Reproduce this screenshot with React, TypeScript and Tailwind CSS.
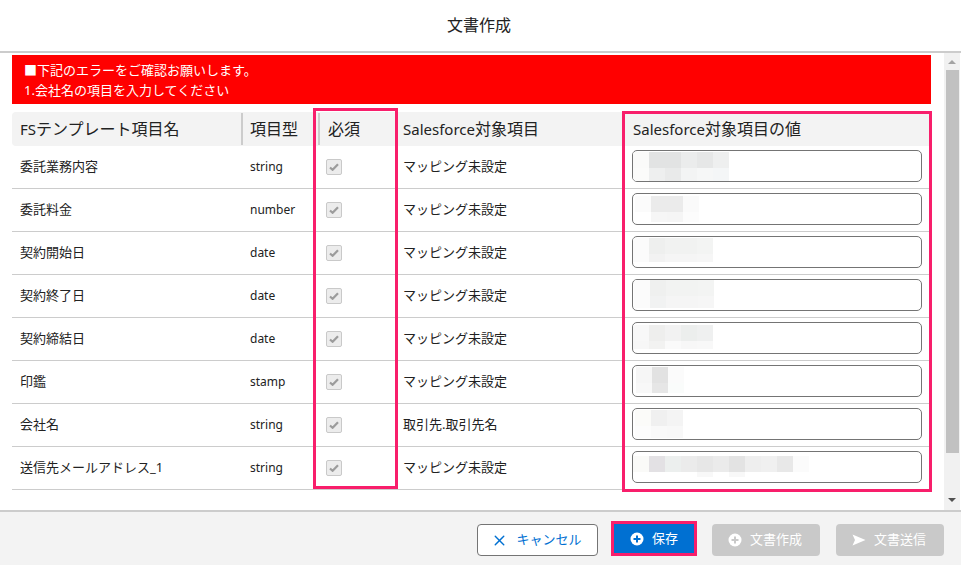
import { X } from 'lucide-react';

type Mosaic = {
    left: number;
    top: number;
    upperHeight: number;
    lowerHeight: number;
    upper: string[];
    lower: string[];
};

type Row = {
    name: string;
    type: string;
    target: string;
    mosaic: Mosaic;
};

const rows: Row[] = [
    {
        name: '委託業務内容', type: 'string', target: 'マッピング未設定',
        mosaic: {
            left: 0, top: 1, upperHeight: 16, lowerHeight: 13,
            upper: ['#fafaf9', '#e2e3e3', '#e2e3e3', '#ebecec', '#e6e7e7', '#eeefef'],
            lower: ['#fbfbfa', '#eeefef', '#e9eaea', '#f3f4f4', '#f6f7f7', '#f4f6f7'],
        },
    },
    {
        name: '委託料金', type: 'number', target: 'マッピング未設定',
        mosaic: {
            left: 2, top: 2, upperHeight: 16, lowerHeight: 10,
            upper: ['#fbfbfb', '#ebebeb', '#ebebeb', '#fafafa'],
            lower: ['#ffffff', '#f6f6f6', '#f5f5f5', '#fcfcfc'],
        },
    },
    {
        name: '契約開始日', type: 'date', target: 'マッピング未設定',
        mosaic: {
            left: 0, top: 1, upperHeight: 16, lowerHeight: 8,
            upper: ['#fbfbfb', '#eeefee', '#f1f2f1', '#f1f2f1', '#f3f4f3'],
            lower: ['#fbfbfb', '#f2f2f2', '#f5f5f5', '#f5f5f5', '#f6f6f6'],
        },
    },
    {
        name: '契約終了日', type: 'date', target: 'マッピング未設定',
        mosaic: {
            left: 1, top: 0, upperHeight: 16, lowerHeight: 12,
            upper: ['#fbfbfb', '#eff0ef', '#f2f3f2', '#f2f3f2', '#f3f4f3'],
            lower: ['#fbfbfb', '#f1f2f2', '#f5f5f5', '#f5f5f5', '#f6f6f6'],
        },
    },
    {
        name: '契約締結日', type: 'date', target: 'マッピング未設定',
        mosaic: {
            left: 0, top: 2, upperHeight: 16, lowerHeight: 8,
            upper: ['#f8f8f8', '#eeeeed', '#f2f2f2', '#eceeed', '#eff0f0'],
            lower: ['#f7f7f7', '#f2f2f1', '#fafafa', '#f7f7f7', '#f8f8f8'],
        },
    },
    {
        name: '印鑑', type: 'stamp', target: 'マッピング未設定',
        mosaic: {
            left: 3, top: 1, upperHeight: 16, lowerHeight: 10,
            upper: ['#f6f6f6', '#e2e2e2', '#fbfbfb'],
            lower: ['#f8f8f8', '#e6e6e6', '#fafcfb'],
        },
    },
    {
        name: '会社名', type: 'string', target: '取引先.取引先名',
        mosaic: {
            left: 2, top: 1, upperHeight: 16, lowerHeight: 12,
            upper: ['#fbfbf9', '#f0f0f0', '#f4f4f4'],
            lower: ['#fcfcfc', '#f9f9f9', '#f8f8f8'],
        },
    },
    {
        name: '送信先メールアドレス_1', type: 'string', target: 'マッピング未設定',
        mosaic: {
            left: 0, top: 4, upperHeight: 16, lowerHeight: 5,
            upper: ['#fafaf8', '#e3e1e4', '#ecefee', '#ebebeb', '#e7e7e7', '#ebebeb', '#e3e3e3', '#eeeeee', '#f0f0f0', '#e8e8e8', '#fbfbfb'],
            lower: ['#ffffff', '#ffffff', '#ffffff', '#ffffff', '#f8f8f8', '#ffffff', '#f8f8f8', '#ffffff', '#ffffff', '#ffffff', '#ffffff'],
        },
    },
];

const gridCols = 'grid grid-cols-[230px_76px_79px_225px_309px]';

const PlusCircle = () => (
    <svg width="14" height="14" viewBox="0 0 14 14" className="shrink-0">
        <circle cx="7" cy="7" r="6.5" fill="#ffffff" />
        <path d="M7 3.5v7M3.5 7h7" stroke="var(--btn-bg)" strokeWidth="2" />
    </svg>
);

const SendIcon = () => (
    <svg width="14" height="12" viewBox="0 0 14 12" className="shrink-0">
        <path d="M0.5 0.5 L13.5 6 L0.5 11.5 L3 6 Z" fill="#ffffff" />
    </svg>
);

const CheckMark = () => (
    <svg width="10" height="8" viewBox="0 0 10 8">
        <path d="M1 4.5 L3.6 6.8 L9 1.2" fill="none" stroke="#9c9c9c" strokeWidth="2.2" />
    </svg>
);

const MosaicBlock = ({ mosaic }: { mosaic: Mosaic }) => (
    <div style={{ marginLeft: mosaic.left, marginTop: mosaic.top }}>
        <div className="flex">
            {mosaic.upper.map((color, i) => (
                <div key={i} className="w-4" style={{ height: mosaic.upperHeight, backgroundColor: color }} />
            ))}
        </div>
        <div className="flex">
            {mosaic.lower.map((color, i) => (
                <div key={i} className="w-4" style={{ height: mosaic.lowerHeight, backgroundColor: color }} />
            ))}
        </div>
    </div>
);

const App = () => {
    return (
        <div className="w-[961px] h-[565px] flex flex-col overflow-hidden bg-white text-[#222222] font-['Noto_Sans','Noto_Sans_CJK_JP',sans-serif]">
            <header className="h-[53px] shrink-0 flex items-center justify-center border-b-2 border-[#cccccc] text-base pb-px pr-[3px]">
                文書作成
            </header>

            <div className="h-[457px] shrink-0 flex">
                <main className="w-[931px] ml-3 pt-[2px] shrink-0">
                    <div className="h-[49px] w-[919px] bg-[#ff0000] text-white text-[13px] leading-[20px] pl-3 pt-[5px]">
                        <p>■下記のエラーをご確認お願いします。</p>
                        <p>1.会社名の項目を入力してください</p>
                    </div>

                    <div className="relative mt-2 w-[919px]">
                        <div className={`${gridCols} h-[34px] bg-[#f3f3f3] rounded-l text-base items-center`}>
                            <div className="h-[32px] flex items-center pl-2 border-r-2 border-[#cccccc] w-[231px]"><span><span className="text-[15px]">FS</span>テンプレート項目名</span></div>
                            <div className="pl-2">項目型</div>
                            <div className="h-[32px] flex items-center pl-2 border-l-2 border-[#cccccc]">必須</div>
                            <div className="pl-[6px]"><span className="text-[15px]">Salesforce</span>対象項目</div>
                            <div className="pl-[11px]"><span className="text-[15px]">Salesforce</span>対象項目の値</div>
                        </div>

                        {rows.map((row) => (
                            <div key={row.name} className={`${gridCols} h-[43px] border-b border-[#cccccc] text-[13px]`}>
                                <div className="pl-2 flex items-center">{row.name}</div>
                                <div className="pl-2 flex items-center text-[12px]">{row.type}</div>
                                <div className="pl-2 flex items-center">
                                    <span className="w-4 h-4 flex items-center justify-center rounded-[2px] border border-[#c9c9c9] bg-[#ececec]">
                                        <CheckMark />
                                    </span>
                                </div>
                                <div className="pl-[6px] flex items-center">{row.target}</div>
                                <div className="pl-[10px] pt-1">
                                    <div className="w-[290px] h-[32px] rounded-[5px] border border-[#747474] overflow-hidden">
                                        <MosaicBlock mosaic={row.mosaic} />
                                    </div>
                                </div>
                            </div>
                        ))}

                        <div className="absolute left-[301px] top-[-4px] w-[85px] h-[381px] border-[3px] border-[#f81e6b]" />
                        <div className="absolute left-[610px] top-[-1px] w-[310px] h-[381px] border-[3px] border-[#f81e6b]" />
                    </div>
                </main>

                <div className="w-4 ml-px shrink-0 bg-[#f1f1f1] flex flex-col items-center">
                    <div className="h-[17px] flex items-center justify-center">
                        <span className="w-0 h-0 border-x-[4px] border-x-transparent border-b-[4px] border-b-[#a3a3a3]" />
                    </div>
                    <div className="w-[13px] h-[383px] bg-[#c1c1c1]" />
                    <div className="flex-1 flex items-center justify-center pt-[36px]">
                        <span className="w-0 h-0 border-x-[4px] border-x-transparent border-t-[4px] border-t-[#505050]" />
                    </div>
                </div>
            </div>

            <footer className="flex-1 flex items-start justify-end pt-3 pr-[17px] border-t-2 border-[#cccccc] bg-[#f3f3f3] text-[13px]">
                <button className="w-[121px] h-[32px] flex items-center justify-center gap-2 pr-[2px] rounded border border-[#747474] bg-white text-[#0070d2]">
                    <X size={17} strokeWidth={2} />
                    キャンセル
                </button>
                <button className="ml-4 w-[80px] h-[29px] flex items-center justify-center gap-2 bg-[#0070d2] text-white outline-[3px] outline-[#f81e6b] [--btn-bg:#0070d2]">
                    <PlusCircle />
                    保存
                </button>
                <button className="ml-[18px] w-[108px] h-[32px] flex items-center justify-center gap-2 pr-[2px] rounded bg-[#c9c9c9] text-white [--btn-bg:#c9c9c9]">
                    <PlusCircle />
                    文書作成
                </button>
                <button className="ml-4 w-[108px] h-[32px] flex items-center justify-center gap-2 pr-[2px] rounded bg-[#c9c9c9] text-white">
                    <SendIcon />
                    文書送信
                </button>
            </footer>
        </div>
    );
};

export default App;
